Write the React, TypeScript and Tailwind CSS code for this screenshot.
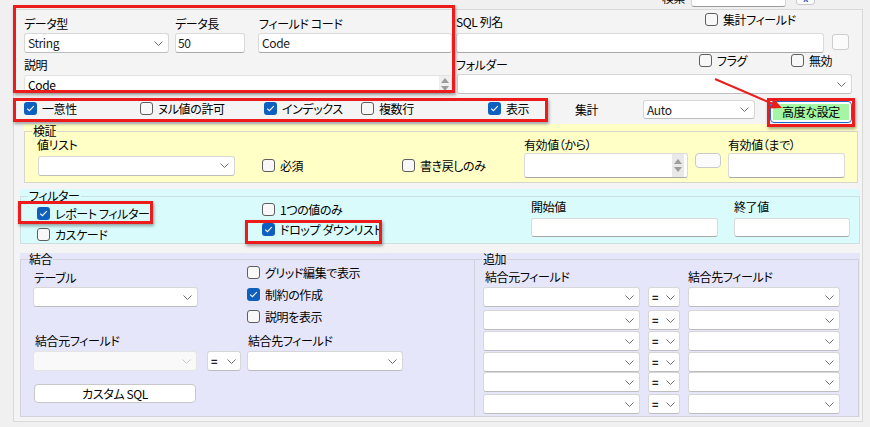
import React from "react";

// Windows-forms style field editor (data type / validation / filter / join)

function Chevron({ light }: { light?: boolean }) {
  return (
    <svg width="9" height="5" viewBox="0 0 9 5" className="shrink-0">
      <path d="M0.5 0.5 L4.5 4.5 L8.5 0.5" fill="none" stroke={light ? "#c6c6c6" : "#707070"} strokeWidth="1" />
    </svg>
  );
}

function Spin({ cls }: { cls: string }) {
  return (
    <div className={`flex shrink-0 flex-col items-center justify-center gap-[3px] ${cls}`}>
      <svg width="8" height="5" viewBox="0 0 8 5">
        <path d="M4 0 L8 5 L0 5 Z" fill="#9c9c9c" />
      </svg>
      <svg width="8" height="5" viewBox="0 0 8 5">
        <path d="M0 0 L8 0 L4 5 Z" fill="#9c9c9c" />
      </svg>
    </div>
  );
}

function Check({ checked, label }: { checked?: boolean; label: string }) {
  return (
    <div className="flex h-[13px] items-center whitespace-nowrap">
      {checked ? (
        <span className="flex h-[13px] w-[13px] shrink-0 items-center justify-center rounded-[3px] bg-[#0f5fbf]">
          <svg width="9" height="7" viewBox="0 0 9 7">
            <path d="M1.2 3.7 L3.4 5.7 L7.8 1.2" fill="none" stroke="#fff" strokeWidth="1.1" />
          </svg>
        </span>
      ) : (
        <span className="h-[13px] w-[13px] shrink-0 rounded-[3px] border border-[#5e5e5e] bg-[#f8f8f8]" />
      )}
      <span className="ml-[5px] leading-[14px]">{label}</span>
    </div>
  );
}

function Select({
  cls,
  value = "",
  disabled,
}: {
  cls: string;
  value?: string;
  disabled?: boolean;
}) {
  return (
    <div
      className={`flex shrink-0 items-center justify-between rounded-[3px] border pl-[3px] pr-[5px] ${
        disabled ? "border-[#e4e4e4] bg-[#f9f9f9]" : "border-[#d7d7d7] border-b-[#bdbdbd] bg-white"
      } ${cls}`}
    >
      <span className="leading-[14px] text-[#1a1a1a]">{value}</span>
      <Chevron light={disabled} />
    </div>
  );
}

function EqSelect({ cls }: { cls: string }) {
  return (
    <div className={`flex h-[20px] shrink-0 items-center justify-between rounded-[3px] border border-[#d7d7d7] border-b-[#bdbdbd] bg-white pl-[3px] pr-[4px] ${cls}`}>
      <span className="text-[11px] font-bold leading-[12px] text-[#222]">=</span>
      <Chevron />
    </div>
  );
}

function Input({ cls, value = "" }: { cls: string; value?: string }) {
  return (
    <div className={`flex shrink-0 items-center rounded-[3px] border border-[#dadada] border-b-[#a9a9a9] bg-white ${cls}`}>
      <span className="leading-[14px] text-[#1a1a1a]">{value}</span>
    </div>
  );
}

const joinRows = ["mt-0", "mt-[3px]", "mt-px", "mt-px", "mt-0", "mt-[2px]"];

export default function App() {
  return (
    <div className="relative h-[427px] w-[870px] overflow-hidden bg-[#f0f0f0] font-['Noto_Sans_CJK_JP','Noto_Sans',sans-serif] text-[12px] tracking-[-0.4px] text-black [font-feature-settings:'palt']">
      {/* clipped search bar above the panel */}
      <div className="flex h-[9px] items-end overflow-hidden">
        <span className="mb-[4px] ml-[662px] leading-[14px]">検索</span>
        <div className="mb-[2px] ml-[6px] h-[20px] w-[95px] rounded-[3px] border border-[#d6d6d6] border-b-[#9a9a9a] bg-white" />
        <div className="mb-[4px] ml-[10px] flex h-[18px] w-[19px] items-end justify-center rounded-[3px] border border-[#c9c9c9] bg-[#fbfbfb] pb-[1px]">
          <span className="text-[9px] font-bold leading-[9px] text-[#1f5fbf]">x</span>
        </div>
      </div>

      {/* main panel */}
      <div className="ml-[13px] h-[413px] w-[850px] border border-[#d9d9d9] bg-[#f4f4f4]">
        {/* top fields */}
        <div className="flex">
          <div className="ml-[10px] w-[428px] shrink-0">
            <div className="mt-[7px] flex h-[14px] leading-[14px]">
              <span className="w-[151px] shrink-0">データ型</span>
              <span className="w-[84px] shrink-0">データ長</span>
              <span>フィールド コード</span>
            </div>
            <div className="mt-[2px] flex h-[20px]">
              <Select cls="h-[20px] w-[145px]" value="String" />
              <Input cls="ml-[6px] h-[20px] w-[70px] pl-[2px]" value="50" />
              <Input cls="ml-[13px] h-[20px] w-[194px] pl-[3px]" value="Code" />
            </div>
            <div className="mt-[5px] h-[14px] leading-[14px]">説明</div>
            <div className="mt-[3px] flex h-[19px] w-[428px] items-center justify-between rounded-[3px] border border-[#e2e2e2] bg-white pl-[3px]">
              <span className="leading-[14px]">Code</span>
              <Spin cls="h-[17px] w-[12px] bg-[#efefef]" />
            </div>
          </div>

          <div className="ml-[4px] w-[396px] shrink-0">
            <div className="flex h-[23px] items-start">
              <span className="mt-[5px] w-[249px] shrink-0 leading-[14px]">SQL 列名</span>
              <div className="mt-[3px]">
                <Check label="集計フィールド" />
              </div>
            </div>
            <div className="flex h-[20px] items-start">
              <Input cls="h-[20px] w-[368px]" />
              <div className="ml-[8px] mt-[1px] h-[16px] w-[17px] rounded-[3px] border border-[#cdcdcd] bg-[#fbfbfb]" />
            </div>
            <div className="flex h-[21px] items-start">
              <span className="mt-[5px] w-[243px] shrink-0 leading-[14px]">フォルダー</span>
              <div className="mt-[1px] w-[92px] shrink-0">
                <Check label="フラグ" />
              </div>
              <div className="mt-[1px]">
                <Check label="無効" />
              </div>
            </div>
            <Select cls="ml-[1px] h-[20px] w-[395px]" />
          </div>
        </div>

        {/* flags row */}
        <div className="mt-[5px] flex h-[24px] items-start">
          <div className="ml-[10px] mt-[3px] w-[116px] shrink-0">
            <Check checked label="一意性" />
          </div>
          <div className="mt-[3px] w-[124px] shrink-0">
            <Check label="ヌル値の許可" />
          </div>
          <div className="mt-[3px] w-[97px] shrink-0">
            <Check checked label="インデックス" />
          </div>
          <div className="mt-[3px] w-[127px] shrink-0">
            <Check label="複数行" />
          </div>
          <div className="mt-[3px] w-[87px] shrink-0">
            <Check checked label="表示" />
          </div>
          <span className="mt-[4px] w-[68px] shrink-0 leading-[14px]">集計</span>
          <Select cls="mt-[1px] h-[19px] w-[112px]" value="Auto" />
          <div className="ml-[15px] mt-[2px] h-[22px] w-[82px] shrink-0 rounded-[4px] border border-[#1d6bc8] bg-white p-[2px]">
            <div className="flex h-full items-center justify-center bg-[#a4f5a4] leading-[14px]">高度な設定</div>
          </div>
        </div>

        {/* validation */}
        <div className="ml-[10px] mt-[5px] w-[834px] bg-[#ffffc6]">
          <fieldset className="-mt-[4px] border border-[#d6d6cc]">
            <legend className="ml-[7px] px-[1px] leading-[14px]">検証</legend>
            <div className="pb-[4px] pl-[12px]">
              <div className="flex h-[14px] leading-[14px]">
                <span className="w-[487px] shrink-0">値リスト</span>
                <span className="w-[204px] shrink-0">有効値（から）</span>
                <span>有効値（まで）</span>
              </div>
              <div className="mt-[1px] flex h-[25px] items-center">
                <Select cls="ml-[1px] h-[20px] w-[197px]" />
                <div className="ml-[27px] w-[140px] shrink-0">
                  <Check label="必須" />
                </div>
                <div className="w-[122px] shrink-0">
                  <Check label="書き戻しのみ" />
                </div>
                <div className="flex h-[25px] w-[164px] shrink-0 justify-end rounded-[3px] border border-[#dadada] border-b-[#a9a9a9] bg-white pr-[3px]">
                  <Spin cls="h-[23px] w-[12px] bg-[#e9e9e9]" />
                </div>
                <div className="ml-[7px] h-[15px] w-[26px] shrink-0 self-start rounded-[4px] border border-[#c9c9c9] bg-[#fbfbfb]" />
                <Input cls="ml-[7px] h-[25px] w-[117px]" />
              </div>
            </div>
          </fieldset>
        </div>

        {/* filter */}
        <div className="ml-[6px] mt-[6px] w-[840px] bg-[#d9fbfb]">
          <fieldset className="mt-px border border-[#cfdede]">
            <legend className="ml-[7px] px-[1px] leading-[14px]">フィルター</legend>
            <div className="flex pb-[2px] pl-[16px]">
              <div className="flex w-[225px] shrink-0 flex-col gap-[8px] pt-[4px]">
                <Check checked label="レポート フィルター" />
                <Check label="カスケード" />
              </div>
              <div className="flex w-[269px] shrink-0 flex-col gap-[7px]">
                <Check label="1つの値のみ" />
                <Check checked label="ドロップ ダウンリスト" />
              </div>
              <div className="-mt-[3px] w-[203px] shrink-0">
                <div className="h-[14px] leading-[14px]">開始値</div>
                <Input cls="mt-[4px] h-[19px] w-[187px]" />
              </div>
              <div className="-mt-[3px]">
                <div className="h-[14px] leading-[14px]">終了値</div>
                <Input cls="mt-[4px] h-[19px] w-[116px]" />
              </div>
            </div>
          </fieldset>
        </div>

        {/* join */}
        <div className="ml-[6px] mt-[9px] flex w-[840px] bg-[#e6e6fa]">
          <fieldset className="-mt-px w-[454px] shrink-0 border border-r-0 border-[#d2d2de]">
            <legend className="ml-[7px] px-[1px] leading-[14px]">結合</legend>
            <div className="pb-[13px] pl-[12px]">
              <div className="flex h-[57px]">
                <div className="w-[214px] shrink-0">
                  <div className="ml-px mt-[5px] h-[14px] leading-[14px]">テーブル</div>
                  <Select cls="mt-[2px] h-[20px] w-[165px]" />
                </div>
                <div className="flex flex-col gap-[9px]">
                  <Check label="グリッド編集で表示" />
                  <Check checked label="制約の作成" />
                  <Check label="説明を表示" />
                </div>
              </div>
              <div className="mt-[11px] flex h-[14px] leading-[14px]">
                <span className="ml-[2px] w-[213px] shrink-0">結合元フィールド</span>
                <span>結合先フィールド</span>
              </div>
              <div className="mt-[3px] flex h-[20px]">
                <Select cls="h-[20px] w-[164px]" disabled />
                <EqSelect cls="ml-[10px] w-[34px]" />
                <Select cls="ml-[6px] h-[20px] w-[156px]" />
              </div>
              <div className="ml-px mt-[13px] flex h-[19px] w-[162px] items-center justify-center rounded-[4px] border border-[#c8c8c8] bg-white leading-[14px]">
                カスタム SQL
              </div>
            </div>
          </fieldset>

          <fieldset className="-mt-px w-[385px] shrink-0 border border-[#d2d2de]">
            <legend className="ml-[7px] px-[1px] leading-[14px]">追加</legend>
            <div className="pb-[2px]">
              <div className="mt-[4px] flex h-[14px] pl-[10px] leading-[14px]">
                <span className="w-[203px] shrink-0">結合元フィールド</span>
                <span>結合先フィールド</span>
              </div>
              <div className="mt-[3px] pl-[8px]">
                {joinRows.map((m, i) => (
                  <div key={i} className={`flex h-[20px] ${m}`}>
                    <Select cls="h-[20px] w-[157px]" />
                    <EqSelect cls="ml-[8px] w-[32px]" />
                    <Select cls="ml-[8px] h-[20px] w-[152px]" />
                  </div>
                ))}
              </div>
            </div>
          </fieldset>
        </div>
      </div>

      {/* red annotation marks */}
      <div className="pointer-events-none absolute left-[13px] top-[5px] h-[88px] w-[442px] border-[3px] border-[#ec1c1c] shadow-[1px_2px_3px_rgba(0,0,0,0.35)]" />
      <div className="pointer-events-none absolute left-[13px] top-[98px] h-[24px] w-[535px] border-[3px] border-[#ec1c1c] shadow-[1px_2px_3px_rgba(0,0,0,0.35)]" />
      <div className="pointer-events-none absolute left-[767px] top-[98px] h-[29px] w-[88px] border-[3px] border-[#ec1c1c] shadow-[1px_2px_3px_rgba(0,0,0,0.35)]" />
      <div className="pointer-events-none absolute left-[18px] top-[201px] h-[23px] w-[135px] border-[3px] border-[#ec1c1c] shadow-[1px_2px_3px_rgba(0,0,0,0.35)]" />
      <div className="pointer-events-none absolute left-[245px] top-[220px] h-[24px] w-[137px] border-[3px] border-[#ec1c1c] shadow-[1px_2px_3px_rgba(0,0,0,0.35)]" />
      <svg className="pointer-events-none absolute left-0 top-0" width="870" height="427">
        <line x1="715" y1="79" x2="773" y2="104" stroke="#ec1c1c" strokeWidth="2" />
        <polygon points="782,108 769.5,108.5 774,99" fill="#ec1c1c" />
      </svg>
    </div>
  );
}
